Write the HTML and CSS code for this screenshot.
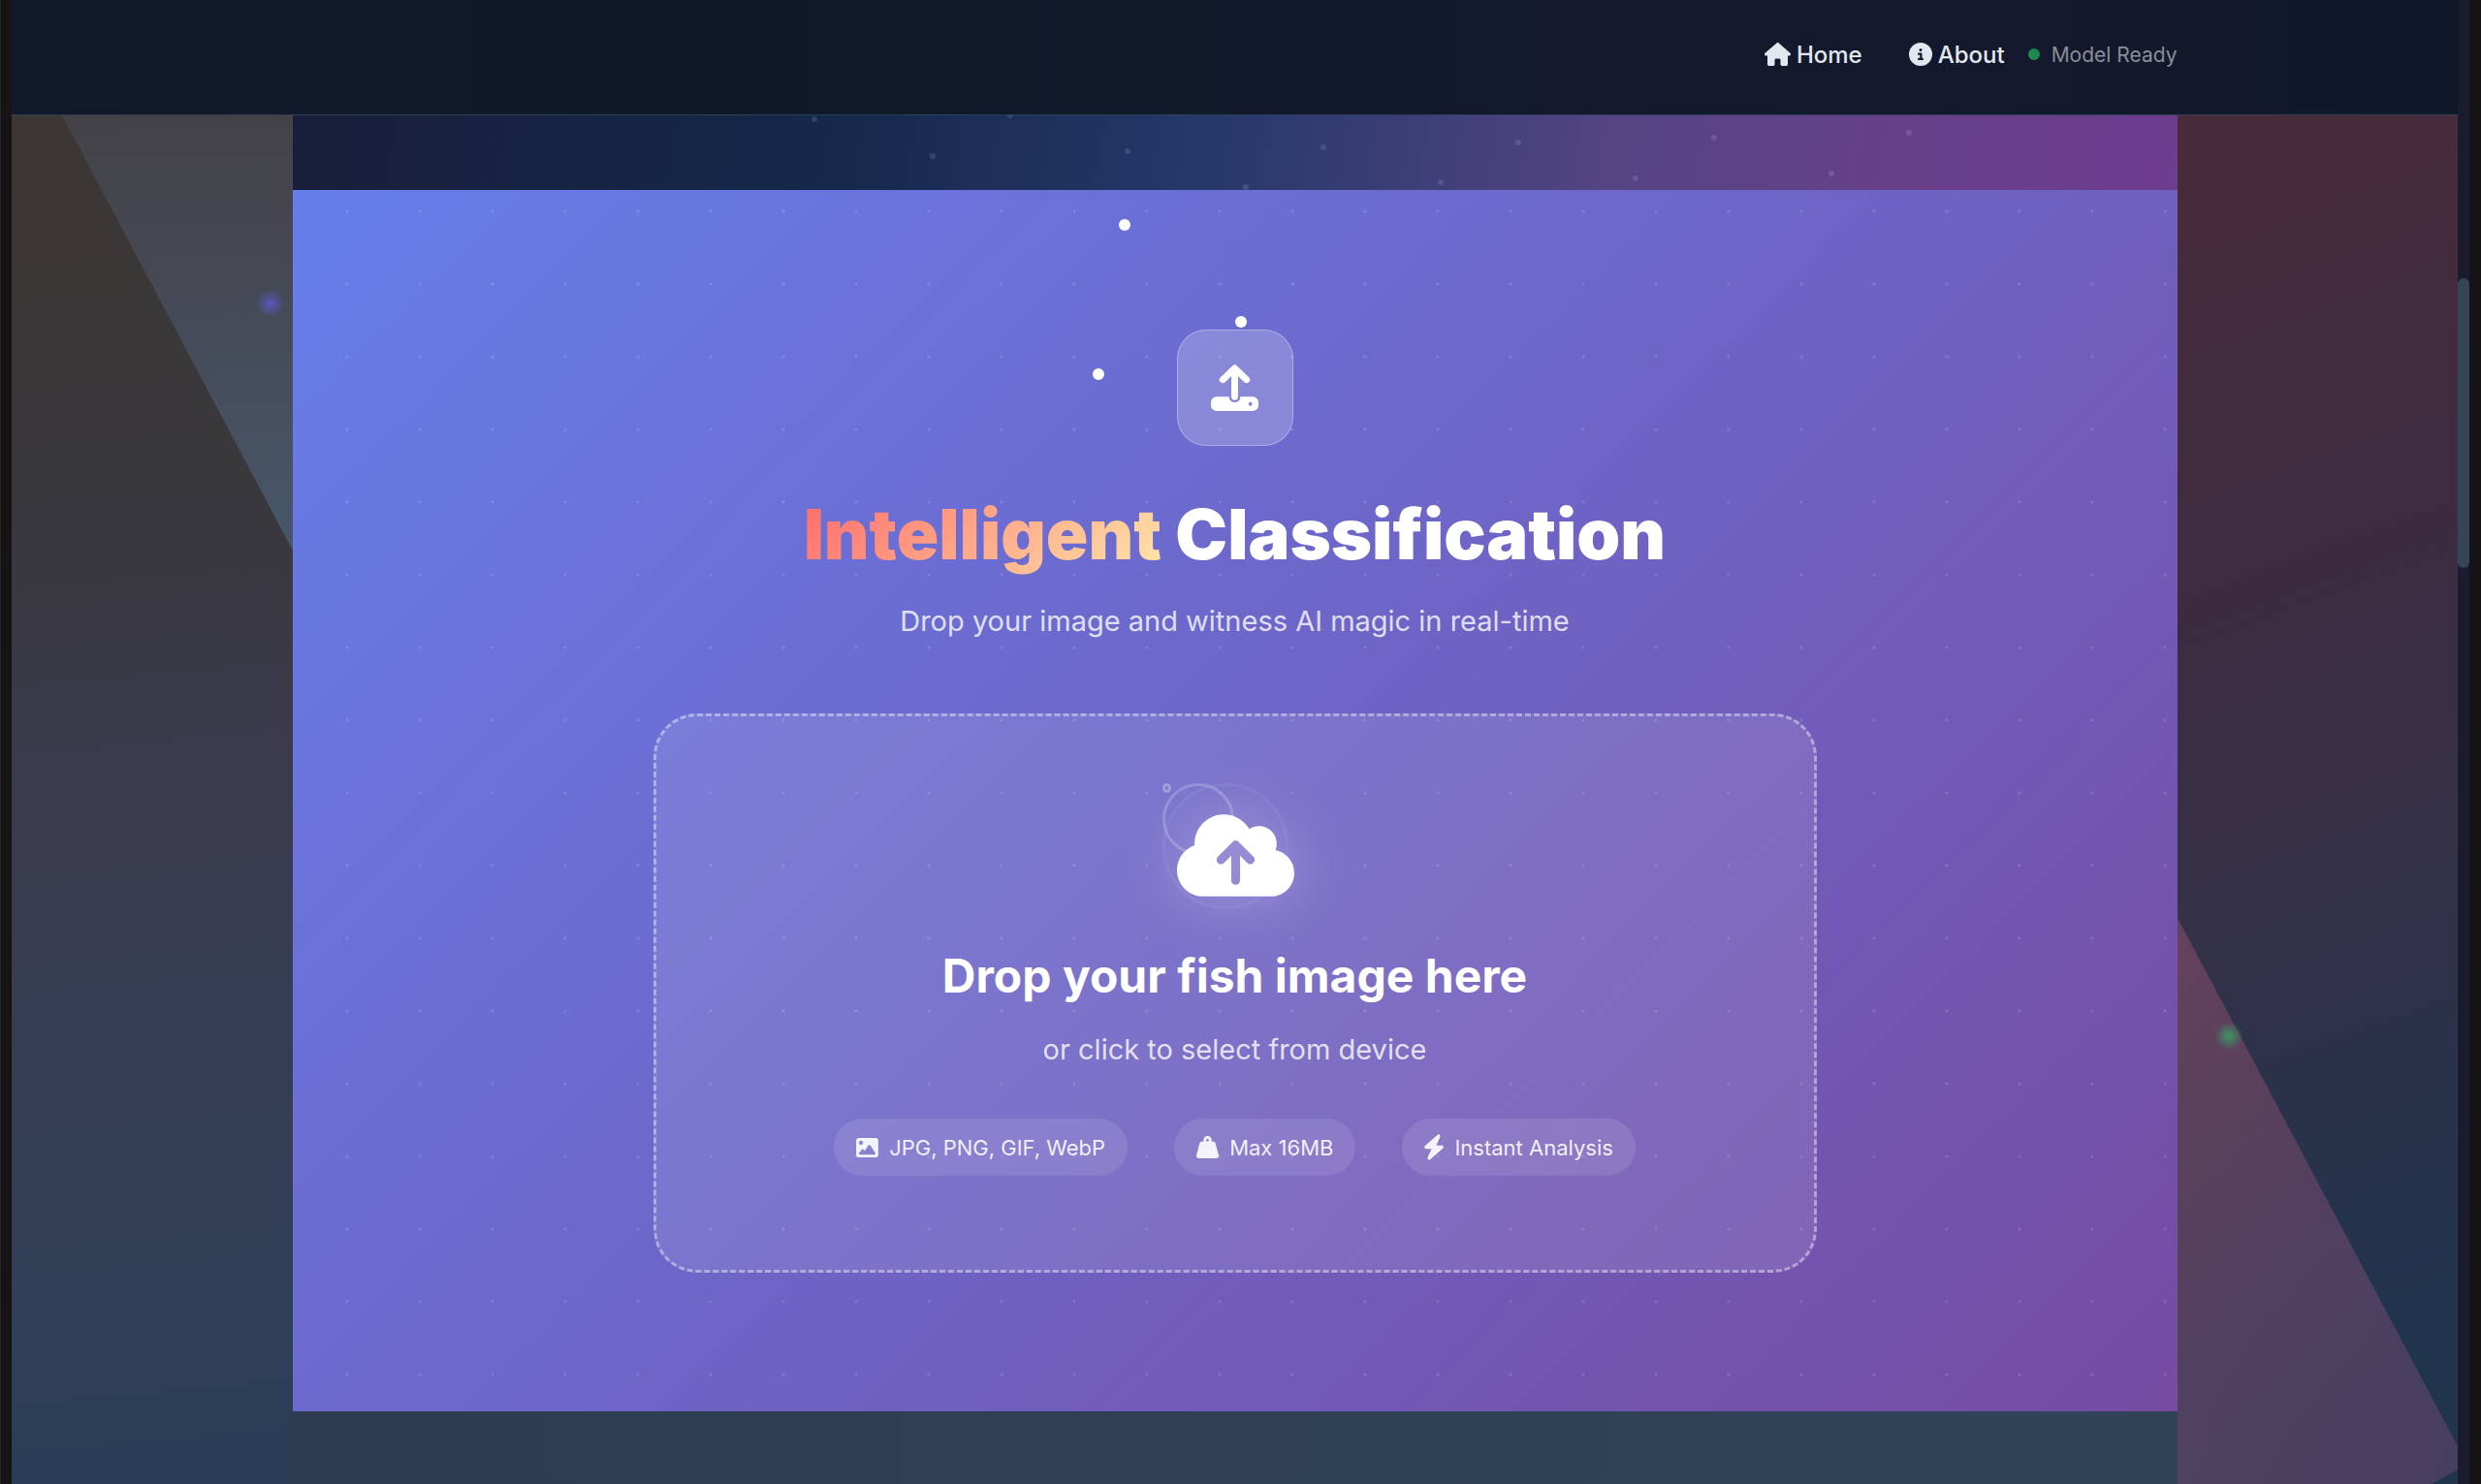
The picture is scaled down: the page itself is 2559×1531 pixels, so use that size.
FILE: index.html
```html
<!DOCTYPE html>
<html lang="en">
<head>
<meta charset="utf-8">
<title>Fish Classification</title>
<link rel="stylesheet" href="styles.css">
</head>
<body>
<div class="frame">
  <div class="viewport">
    <svg class="backdrop" viewBox="0 0 2523 1531" preserveAspectRatio="none" aria-hidden="true">
      <defs>
        <linearGradient id="wedgeLeft" x1="0" y1="0" x2="0" y2="1"><stop offset="0" stop-color="#7082b4" stop-opacity=".15"/><stop offset=".35" stop-color="#6c84b8" stop-opacity=".22"/><stop offset="1" stop-color="#6094c0" stop-opacity=".34"/></linearGradient>
        <linearGradient id="wedgeRight" x1="0" y1="0" x2="1" y2="1"><stop offset="0" stop-color="#a65878" stop-opacity=".42"/><stop offset="1" stop-color="#8a5080" stop-opacity=".36"/></linearGradient>
      </defs>
      <polygon points="52,119 290,568 290,119" fill="url(#wedgeLeft)"/>
      <polygon points="2234,947 2523,1492 2523,1516 2496,1531 2234,1531" fill="url(#wedgeRight)"/>
    </svg>
    <span class="glow glow-violet"></span>
    <span class="glow glow-green"></span>

    <header class="navbar">
      <nav class="container nav-row" aria-label="Main">
        <a class="nav-link" href="#home"><svg class="home-icon" viewBox="0 0 576 512" aria-hidden="true"><path d="M575.800 255.500c0 18-15 32.100-32 32.100h-32l.7 160.200c0 2.700-.2 5.400-.5 8.100V472c0 22.100-17.900 40-40 40H392c-22.100 0-40-17.900-40-40v-88c0-17.700-14.300-32-32-32h-64c-17.700 0-32 14.300-32 32v88c0 22.100-17.900 40-40 40H104c-22.100 0-40-17.900-40-40V287.600H32c-18 0-32-14-32-32.100 0-9 3-17 10-24L266.400 8c7-7 15-8 22-8s15 2 21 7l255.400 224.500c8 7 12 15 11 24z"/></svg>Home</a>
        <a class="nav-link" href="#about"><svg class="info-icon" viewBox="0 0 512 512" aria-hidden="true"><path fill-rule="evenodd" d="M256 512a256 256 0 1 0 0-512 256 256 0 1 0 0 512zM216 336h24v-64h-24c-13.300 0-24-10.700-24-24s10.700-24 24-24h48c13.300 0 24 10.700 24 24v88h8c13.300 0 24 10.700 24 24s-10.700 24-24 24h-80c-13.300 0-24-10.700-24-24s10.700-24 24-24zm40-208a32 32 0 1 1 0 64 32 32 0 1 1 0-64z"/></svg>About</a>
        <span class="status"><span class="status-dot"></span>Model Ready</span>
      </nav>
    </header>

    <main class="container">
      <section class="banner" aria-hidden="true">
        <svg viewBox="0 0 1944 77" preserveAspectRatio="xMidYMid slice">
          <g fill="#fff" fill-opacity=".12">
            <circle cx="538" cy="4" r="3"/><circle cx="740" cy="0" r="3"/>
            <circle cx="660" cy="42" r="3"/><circle cx="861" cy="37" r="3"/><circle cx="1063" cy="33" r="3"/><circle cx="1264" cy="28" r="3"/><circle cx="1466" cy="23" r="3"/><circle cx="1667" cy="18" r="3"/>
            <circle cx="983" cy="74" r="3"/><circle cx="1184" cy="69" r="3"/><circle cx="1385" cy="65" r="3"/><circle cx="1587" cy="60" r="3"/>
          </g>
        </svg>
      </section>
      <section class="hero">
        <span class="particle particle-a"></span>
        <span class="particle particle-b"></span>
        <span class="particle particle-c"></span>
        <div class="badge"><svg viewBox="0 0 50 50" aria-hidden="true"><path d="M25 5v29M12.500 16 25 4l12.500 12" fill="none" stroke="#fff" stroke-width="7" stroke-linecap="round" stroke-linejoin="round"/><path fill="#fff" fill-rule="evenodd" d="M6 34h13a6 6 0 0 0 12 0h13a6 6 0 0 1 6 6v3a6 6 0 0 1-6 6H6a6 6 0 0 1-6-6v-3a6 6 0 0 1 6-6zM41.500 39.500a2 2 0 1 0 0 4 2 2 0 1 0 0-4z"/></svg></div>
        <h1><span class="accent">Intelligent</span> Classification</h1>
        <p class="lead">Drop your image and witness AI magic in real-time</p>
        <button class="dropzone" type="button">
          <span class="cloud">
            <span class="ring ring-large"></span>
            <span class="ring ring-medium"></span>
            <span class="ring ring-small"></span>
            <svg viewBox="0 0 640 448" aria-hidden="true"><path fill="#fff" fill-rule="evenodd" d="M144 448C64.500 448 0 383.500 0 304c0-62.800 40.200-116.200 96.200-135.900-.1-2.700-.2-5.400-.2-8.100C96 71.600 167.600 0 256 0c59.300 0 111 32.200 138.700 80.200C409.900 70 428.300 64 448 64c53 0 96 43 96 96 0 12.200-2.300 23.800-6.400 34.600C596 206.400 640 258.100 640 320c0 70.700-57.300 128-128 128H144zM223 231c-9.400 9.400-9.400 24.600 0 33.900s24.600 9.400 33.900 0l39.100-39V360c0 13.300 10.700 24 24 24s24-10.700 24-24V225.900l39 39c9.400 9.400 24.600 9.400 33.900 0s9.400-24.600 0-33.900l-80-80c-9.400-9.400-24.600-9.400-33.900 0l-80 80z"/></svg>
          </span>
          <span class="drop-title">Drop your fish image here</span>
          <span class="drop-sub">or click to select from device</span>
          <span class="chips">
            <span class="chip"><svg class="chip-image" viewBox="0 0 512 448" aria-hidden="true"><path fill-rule="evenodd" d="M0 64C0 28.700 28.700 0 64 0h384c35.300 0 64 28.700 64 64v320c0 35.300-28.700 64-64 64H64c-35.300 0-64-28.700-64-64V64zm323.800 106.500c-4.500-6.600-11.900-10.500-19.800-10.500s-15.400 3.900-19.800 10.500l-87 127.600-26.500-33.100c-4.600-5.700-11.500-9-18.700-9s-14.200 3.300-18.700 9l-64 80c-5.800 7.200-6.900 17.100-2.900 25.400S78.800 384 88 384h336c8.900 0 17.100-4.900 21.200-12.800s3.600-17.400-1.400-24.700l-120-176zM112 160a48 48 0 1 0 0-96 48 48 0 1 0 0 96z"/></svg>JPG, PNG, GIF, WebP</span>
            <span class="chip"><svg class="chip-weight" viewBox="0 0 512 512" aria-hidden="true"><path fill-rule="evenodd" d="M224 96a32 32 0 1 1 64 0 32 32 0 1 1-64 0zm122.500 32c3.500-10 5.500-20.800 5.500-32 0-53-43-96-96-96s-96 43-96 96c0 11.200 1.900 22 5.500 32H120c-22 0-41.200 15-46.600 36.400L3.500 426.600c-2.300 9.400-3.500 19-3.500 28.600C0 486.600 25.400 512 56.800 512h398.400c31.400 0 56.800-25.400 56.800-56.800 0-9.600-1.200-19.200-3.500-28.600l-69.900-262.200C433.200 143 414 128 392 128h-45.500z"/></svg>Max 16MB</span>
            <span class="chip"><svg class="chip-bolt" viewBox="32 32 384 448" aria-hidden="true"><path d="M349.400 44.600c5.900-13.700 1.500-29.700-10.600-38.500s-28.600-8-39.900 1.800l-256 224c-10 8.800-13.600 22.900-8.900 35.300S50.700 288 64 288h111.500L98.600 467.400c-5.900 13.700-1.500 29.700 10.600 38.500s28.600 8 39.900-1.800l256-224c10-8.800 13.600-22.900 8.900-35.300s-16.600-20.700-30-20.700H272.500l76.900-179.500z"/></svg>Instant Analysis</span>
          </span>
        </button>
      </section>
      <section class="next"></section>
    </main>
  </div>
  <div class="track" aria-hidden="true"><span class="thumb"></span></div>
</div>
</body>
</html>
```
FILE: styles.css
```css
* { box-sizing: border-box; }

body {
  margin: 0;
  font-family: Inter, "Liberation Sans", sans-serif;
  color: #fff;
  background: #151314;
}

.frame {
  display: flex;
  height: 100vh;
  overflow: hidden;
  padding: 0 12px 0 11px;
  border-left: 1px solid #262628;
}

.viewport {
  position: relative;
  flex: 1;
  display: flex;
  flex-direction: column;
  background:
    linear-gradient(160deg, #482b3a 8%, #3d2b40 38%, #353148 58%, #28324b 76%, #20344e 92%) right / 12% 100% no-repeat,
    linear-gradient(175deg, #3c3733 5%, #39383c 30%, #3a3a4c 45%, #303f58 78%, #243a54 100%);
}

.backdrop { position: absolute; inset: 0; width: 100%; height: 100%; }

.glow {
  position: absolute;
  width: 30px;
  height: 30px;
  margin: -15px;
  border-radius: 50%;
}
.glow-violet { left: 267px; top: 313px; background: radial-gradient(circle, rgba(90, 88, 196, .9), transparent 70%); }
.glow-green { right: 236px; top: 1069px; background: radial-gradient(circle, rgba(60, 152, 96, .95), transparent 70%); }

.container { width: 100%; max-width: 1944px; margin: 0 auto; }

.navbar {
  position: relative;
  height: 119px;
  display: flex;
  padding-bottom: 6px;
  border-bottom: 1px solid #2d4052;
  background: linear-gradient(90deg, #11182a, #0f192a 35%, #15192e 70%, #11172a);
}

.nav-row { display: flex; align-items: center; justify-content: flex-end; }

.nav-link {
  display: flex;
  align-items: center;
  gap: 6px;
  margin-right: 48px;
  font-size: 24px;
  font-weight: 500;
  color: #e2e8f0;
  text-decoration: none;
}
.nav-link + .nav-link { margin-right: 24px; }
.nav-link svg { fill: currentColor; height: 24px; }
.home-icon { width: 27px; }
.info-icon { width: 24px; }

.status { display: flex; align-items: center; gap: 12px; font-size: 21px; color: #8b8d98; }
.status-dot { width: 12px; height: 12px; border-radius: 50%; background: #20884f; }

main { position: relative; flex: 1; display: flex; flex-direction: column; }

.banner {
  height: 77px;
  background: linear-gradient(100deg, #191e3a, #14284a 28%, #24386a 48%, #544484 70%, #67408a 85%, #6d3d8e);
}
.banner svg { display: block; width: 100%; height: 100%; }

.hero {
  position: relative;
  height: 1260px;
  display: flex;
  flex-direction: column;
  align-items: center;
  padding-top: 144px;
  background:
    radial-gradient(circle at 56px 22px, rgba(255, 255, 255, .14) 1px, transparent 2px) 0 0 / 75px 75px,
    linear-gradient(135deg, #667eea, #764ba2);
}

.particle { position: absolute; width: 12px; height: 12px; border-radius: 50%; background: #fff; }
.particle-a { left: 852px; top: 30px; }
.particle-b { left: 972px; top: 130px; }
.particle-c { left: 825px; top: 184px; }

.badge {
  display: grid;
  place-items: center;
  width: 120px;
  height: 120px;
  border: 1px solid rgba(255, 255, 255, .3);
  border-radius: 30px;
  background: rgba(255, 255, 255, .2);
}
.badge svg { width: 49px; height: 49px; }

h1 {
  margin: 48px 0 24px;
  font-size: 72px;
  font-weight: 900;
  line-height: 86px;
}
.accent {
  color: transparent;
  background: linear-gradient(135deg, #ff6b6b, #ffe6a8);
  background-clip: text;
}

.lead { margin: 0; font-size: 29px; line-height: 46px; color: rgba(255, 255, 255, .8); }

.dropzone {
  display: flex;
  flex-direction: column;
  align-items: center;
  width: 1200px;
  height: 577px;
  margin-top: 72px;
  padding: 72px 0 0;
  border: 3px dashed rgba(255, 255, 255, .4);
  border-radius: 45px;
  font: inherit;
  color: inherit;
  background: rgba(255, 255, 255, .1);
}

.cloud { position: relative; display: grid; place-items: center; width: 120px; height: 143px; }
.cloud svg { position: relative; width: 121px; height: 85px; filter: drop-shadow(0 0 30px rgba(255, 255, 255, .3)); }
.ring { position: absolute; left: -15px; top: -3px; border-radius: 50%; border: 3px solid rgba(255, 255, 255, .2); }
.ring-large { width: 130px; height: 130px; border-color: rgba(255, 255, 255, .06); }
.ring-medium { width: 74px; height: 74px; }
.ring-small { width: 9px; height: 10px; border-color: rgba(255, 255, 255, .3); }

.drop-title { margin-top: 24px; font-size: 48px; font-weight: 700; line-height: 58px; }
.drop-sub { margin-top: 24px; font-size: 29px; line-height: 46px; color: rgba(255, 255, 255, .8); }

.chips { display: flex; gap: 48px; margin-top: 48px; }
.chip {
  display: flex;
  align-items: center;
  gap: 11px;
  height: 59px;
  padding: 0 23px;
  border-radius: 30px;
  font-size: 22px;
  color: rgba(255, 255, 255, .9);
  background: rgba(255, 255, 255, .1);
}
.chip svg { fill: currentColor; }
.chip-image { width: 23px; height: 20px; }
.chip-weight { width: 23px; height: 23px; }
.chip-bolt { width: 20px; height: 23px; overflow: visible; }

.next { flex: 1; background: linear-gradient(90deg, #2d3d4f, #304358); }

.track { width: 12px; background: #1a1b2e; }
.thumb { display: block; height: 299px; margin-top: 287px; border-radius: 6px; background: #334557; }
```
